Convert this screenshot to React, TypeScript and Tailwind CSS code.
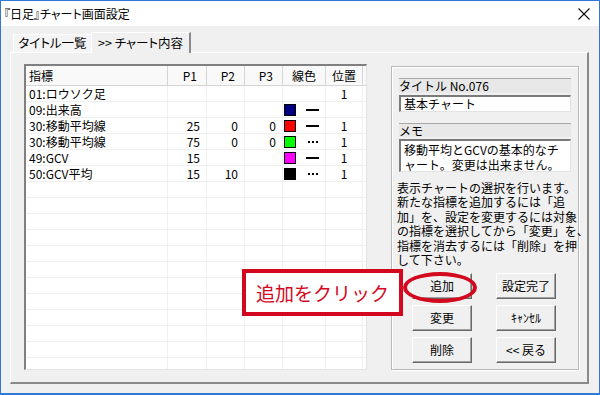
import React from "react";

type Row = {
  name: string;
  p1: string;
  p2: string;
  p3: string;
  color: string | null;
  line: "solid" | "dot" | null;
  pos: string;
};

const rows: Row[] = [
  { name: "01:ロウソク足", p1: "", p2: "", p3: "", color: null, line: null, pos: "1" },
  { name: "09:出来高", p1: "", p2: "", p3: "", color: "#000080", line: "solid", pos: "" },
  { name: "30:移動平均線", p1: "25", p2: "0", p3: "0", color: "#ff0000", line: "solid", pos: "1" },
  { name: "30:移動平均線", p1: "75", p2: "0", p3: "0", color: "#00ff00", line: "dot", pos: "1" },
  { name: "49:GCV", p1: "15", p2: "", p3: "", color: "#ff00ff", line: "solid", pos: "1" },
  { name: "50:GCV平均", p1: "15", p2: "10", p3: "", color: "#000000", line: "dot", pos: "1" },
];

const emptyRows = Array.from({ length: 14 });

const font = { fontFamily: '"Noto Sans CJK JP", "Noto Sans", sans-serif' };

function Btn({ label }: { label: string }) {
  return (
    <div className="h-[26px] w-[60px] flex items-center justify-center bg-[#f0f0f0] border-t border-l border-white border-r border-b border-r-[#696969] border-b-[#696969] shadow-[inset_-1px_-1px_0_#a0a0a0] text-[12px] leading-none text-black">
      {label}
    </div>
  );
}

function LineMark({ kind }: { kind: "solid" | "dot" }) {
  if (kind === "solid") {
    return <div className="w-[13px] h-[2px] bg-black" />;
  }
  return (
    <div className="w-[13px] flex justify-center gap-[2px]">
      <div className="w-[2px] h-[2px] bg-black" />
      <div className="w-[2px] h-[2px] bg-black" />
      <div className="w-[2px] h-[2px] bg-black" />
    </div>
  );
}

const cols = "grid grid-cols-[142px_39px_38px_38px_43px_37px_1fr]";

export default function App() {
  return (
    <div
      className="relative w-[600px] h-[395px] border border-[#2f78d6] border-b-2 bg-[#f0f0f0] flex flex-col text-black overflow-hidden"
      style={font}
    >
      {/* Title bar */}
      <div className="h-[25px] bg-white flex items-center justify-between pl-[3px] pr-[9px]">
        <span className="text-[12px] leading-none [font-feature-settings:'palt']">『日足』チャート画面設定</span>
        <svg width="12" height="12" viewBox="0 0 12 12">
          <line x1="0.5" y1="0.5" x2="11.5" y2="11.5" stroke="#111" strokeWidth="1.1" />
          <line x1="11.5" y1="0.5" x2="0.5" y2="11.5" stroke="#111" strokeWidth="1.1" />
        </svg>
      </div>

      {/* Client */}
      <div className="flex-1 flex flex-col pl-[9px] pr-[10px] pt-[6px] pb-[9px]">
        {/* Tabs */}
        <div className="h-[20px] flex items-end pl-[3px] relative z-10 [font-feature-settings:'palt']">
          <div className="h-[18px] w-[78px] flex items-center justify-center bg-[#f4f4f4] border-t border-l border-white text-[12.5px] leading-none">
            タイトル一覧
          </div>
          <div className="h-[21px] w-[100px] -mb-[1px] flex items-center justify-center bg-[#f0f0f0] border-t border-l border-white border-r-2 border-r-[#8a8a8a] text-[12.5px] leading-none">
            &gt;&gt; チャート内容
          </div>
        </div>

        {/* Panel */}
        <div className="flex-1 flex border-t border-l border-white border-r-2 border-b-2 border-r-[#8a8a8a] border-b-[#8a8a8a] pl-[13px] pt-[11px] pr-[8px] pb-[12px] gap-[24px]">
          {/* List */}
          <div className="w-[343px] h-[306px] bg-white border-t-2 border-l-2 border-t-[#808080] border-l-[#808080] border-r border-b border-r-[#e3e3e3] border-b-[#e3e3e3] overflow-hidden text-[12px] leading-none">
            <div className={`${cols} h-[20px] bg-[#f9f9f9] border-b border-[#d5d5d5]`}>
              <div className="flex items-center pl-[3px] border-r border-[#d5d5d5]">指標</div>
              <div className="flex items-center justify-end pr-[9px] border-r border-[#d5d5d5]">P1</div>
              <div className="flex items-center justify-end pr-[9px] border-r border-[#d5d5d5]">P2</div>
              <div className="flex items-center justify-end pr-[9px] border-r border-[#d5d5d5]">P3</div>
              <div className="flex items-center justify-center border-r border-[#d5d5d5]">線色</div>
              <div className="flex items-center justify-center border-r border-[#d5d5d5]">位置</div>
              <div />
            </div>
            {rows.map((r, i) => (
              <div key={i} className={`${cols} h-[16px] border-b border-[#f0f0f0]`}>
                <div className="flex items-center pl-[3px] border-r border-[#f0f0f0]">{r.name}</div>
                <div className="flex items-center justify-end pr-[6px] border-r border-[#f0f0f0]">{r.p1}</div>
                <div className="flex items-center justify-end pr-[6px] border-r border-[#f0f0f0]">{r.p2}</div>
                <div className="flex items-center justify-end pr-[6px] border-r border-[#f0f0f0]">{r.p3}</div>
                <div className="flex items-center pl-[1px] gap-[10px] border-r border-[#f0f0f0]">
                  {r.color ? (
                    <div className="w-[12px] h-[12px] border border-black" style={{ backgroundColor: r.color }} />
                  ) : null}
                  {r.line ? <LineMark kind={r.line} /> : null}
                </div>
                <div className="flex items-center justify-center border-r border-[#f0f0f0]">{r.pos}</div>
                <div />
              </div>
            ))}
            {emptyRows.map((_, i) => (
              <div key={`e${i}`} className={`${cols} h-[16px] border-b border-[#f0f0f0]`}>
                <div className="border-r border-[#f0f0f0]" />
                <div className="border-r border-[#f0f0f0]" />
                <div className="border-r border-[#f0f0f0]" />
                <div className="border-r border-[#f0f0f0]" />
                <div className="border-r border-[#f0f0f0]" />
                <div className="border-r border-[#f0f0f0]" />
                <div />
              </div>
            ))}
          </div>

          {/* Group box */}
          <div className="w-[188px] h-[304px] mt-[2px] border border-[#b9b9b9] shadow-[inset_1px_1px_0_#fff,1px_1px_0_#fff] flex flex-col pt-[11px] text-[12px]">
            <div className="mx-[7px] h-[15px] flex items-center bg-[#e8e8e8] border-t border-[#a8a8a8] leading-none">
              タイトル No.076
            </div>
            <div className="mx-[7px] mt-[2px] h-[17px] bg-white border-t-2 border-l-2 border-t-[#7a7a7a] border-l-[#7a7a7a] border-r border-b border-r-[#e3e3e3] border-b-[#e3e3e3] flex items-center pl-[3px] leading-none">
              基本チャート
            </div>
            <div className="mx-[7px] mt-[11px] h-[14px] flex items-center bg-[#e8e8e8] border-t border-[#a8a8a8] leading-none">
              メモ
            </div>
            <div className="mx-[7px] mt-[2px] h-[33px] bg-white border-t-2 border-l-2 border-t-[#7a7a7a] border-l-[#7a7a7a] border-r border-b border-r-[#e3e3e3] border-b-[#e3e3e3] pl-[3px] pt-[2px] leading-[14.5px] text-[12px]">
              移動平均とGCVの基本的なチ
              <br />
              ャート。変更は出来ません。
            </div>
            <div className="ml-[5px] mt-[9px] h-[88px] leading-[14.4px] text-[12px] whitespace-nowrap">
              表示チャートの選択を行います。
              <br />
              新たな指標を追加するには「追
              <br />
              加」を、設定を変更するには対象
              <br />
              の指標を選択してから「変更」を、
              <br />
              指標を消去するには「削除」を押
              <br />
              して下さい。
            </div>
            <div className="ml-[20px] mt-[4px] grid grid-cols-[60px_60px] gap-x-[24px] gap-y-[6px]">
              <Btn label="追加" />
              <Btn label="設定完了" />
              <Btn label="変更" />
              <Btn label="ｷｬﾝｾﾙ" />
              <Btn label="削除" />
              <Btn label="<< 戻る" />
            </div>
          </div>
        </div>
      </div>

      {/* Annotation overlays */}
      <div className="absolute left-[241px] top-[268px] w-[161px] h-[47px] border-4 border-[#d3081e] bg-white flex items-center justify-center">
        <span className="text-[19px] leading-none text-[#d3081e]">追加をクリック</span>
      </div>
      <div className="absolute left-[402px] top-[271px] w-[74px] h-[31px] border-4 border-[#d3081e] rounded-[50%]" />
    </div>
  );
}
